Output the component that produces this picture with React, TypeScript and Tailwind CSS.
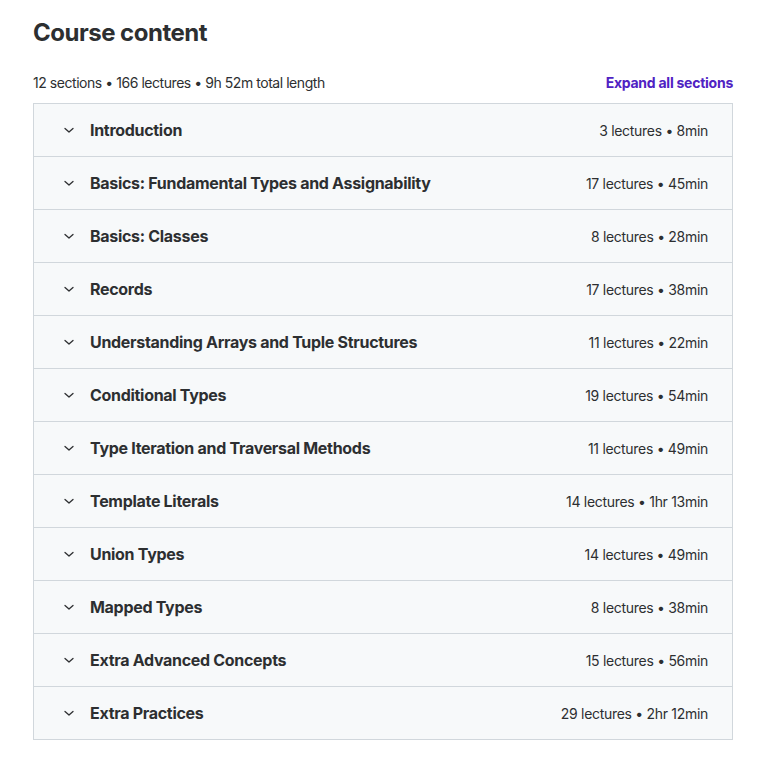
const sections = [
  { title: "Introduction", meta: "3 lectures • 8min" },
  { title: "Basics: Fundamental Types and Assignability", meta: "17 lectures • 45min" },
  { title: "Basics: Classes", meta: "8 lectures • 28min" },
  { title: "Records", meta: "17 lectures • 38min" },
  { title: "Understanding Arrays and Tuple Structures", meta: "11 lectures • 22min" },
  { title: "Conditional Types", meta: "19 lectures • 54min" },
  { title: "Type Iteration and Traversal Methods", meta: "11 lectures • 49min" },
  { title: "Template Literals", meta: "14 lectures • 1hr 13min" },
  { title: "Union Types", meta: "14 lectures • 49min" },
  { title: "Mapped Types", meta: "8 lectures • 38min" },
  { title: "Extra Advanced Concepts", meta: "15 lectures • 56min" },
  { title: "Extra Practices", meta: "29 lectures • 2hr 12min" },
];

function Chevron() {
  return (
    <svg width="12" height="12" viewBox="0 0 12 12" fill="none" className="shrink-0">
      <path d="M2 4.5 6 8l4-3.5" stroke="#2d2f31" strokeWidth="1.3" strokeLinecap="round" strokeLinejoin="round" />
    </svg>
  );
}

export default function App() {
  return (
    <div className="min-h-screen bg-white pl-[33px] pt-[18px] text-[#2d2f31]" style={{ fontFamily: "Inter, 'Noto Sans', sans-serif" }}>
      <div className="w-[700px]">
        <h2 className="text-[24px] font-bold leading-[30px] tracking-[-0.5px]">Course content</h2>
        <div className="mt-[25px] flex items-center justify-between text-[14px] leading-[20px]">
          <span className="tracking-[-0.45px]">12 sections • 166 lectures • 9h 52m total length</span>
          <button className="text-[14px] font-bold tracking-[-0.25px] text-[#5022c3]">Expand all sections</button>
        </div>
        <div className="mt-[10px] border border-[#d1d7dc]">
          {sections.map((s, i) => (
            <div
              key={s.title}
              className={
                "flex items-center bg-[#f7f9fa] pl-[29px] pr-[24px] tracking-[-0.3px] " +
                (i < sections.length - 1 ? "h-[53px] border-b border-[#d1d7dc]" : "h-[52px]")
              }
            >
              <Chevron />
              <span className="ml-[15px] flex-1 text-[16px] font-bold">{s.title}</span>
              <span className="text-[14px]">{s.meta}</span>
            </div>
          ))}
        </div>
      </div>
    </div>
  );
}
